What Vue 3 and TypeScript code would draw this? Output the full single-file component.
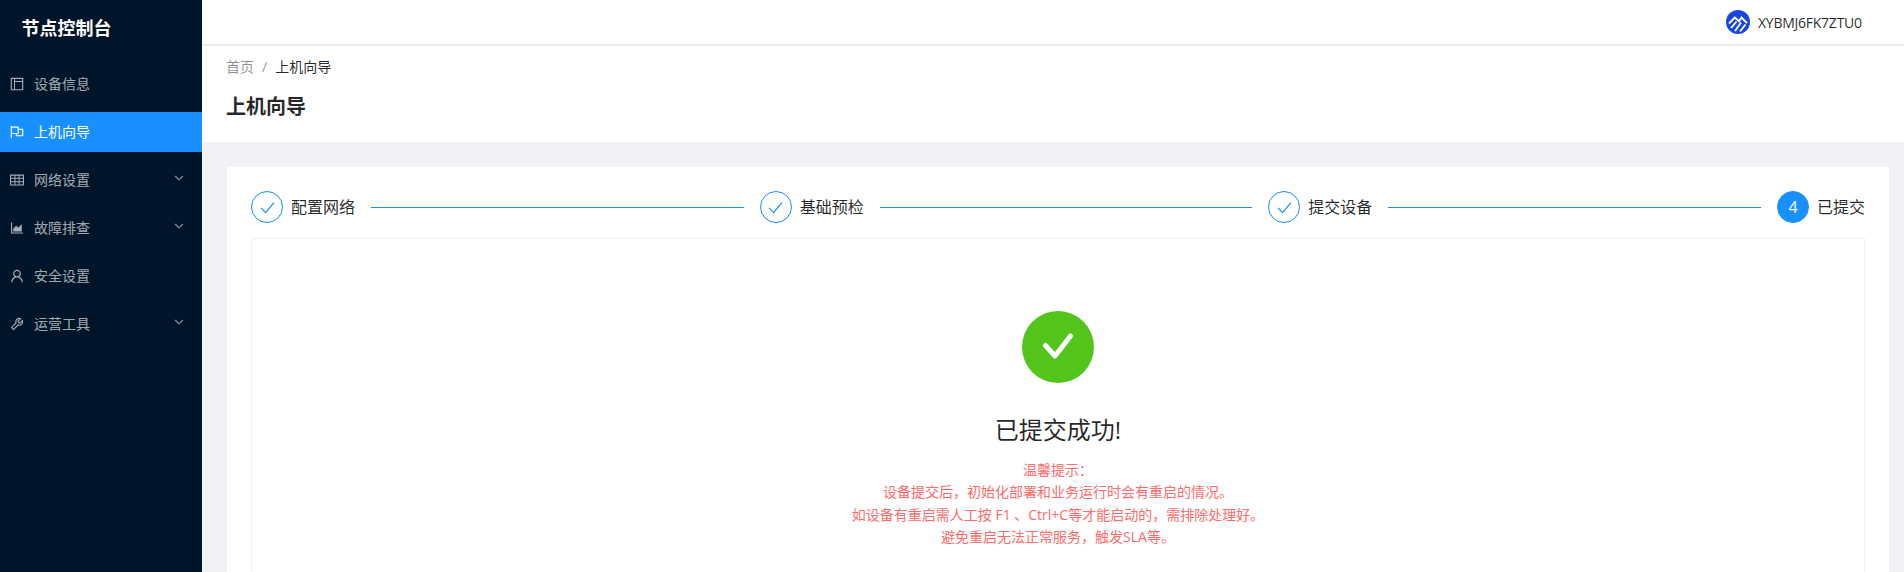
<template>
  <div class="layout">
    <aside class="sider">
      <div class="logo">节点控制台</div>
      <nav class="menu">
        <div v-for="item in menu" :key="item.label" :class="['menu-item', { active: item.active }]">
          <svg class="menu-icon" viewBox="64 64 896 896">
            <path :d="item.icon" fill="currentColor" />
          </svg>
          <span class="menu-label">{{ item.label }}</span>
          <svg v-if="item.sub" class="menu-arrow" viewBox="0 0 12 12">
            <path d="M1.2 3.6 6 8.2l4.8-4.6" fill="none" stroke="currentColor" stroke-width="1.7" />
          </svg>
        </div>
      </nav>
    </aside>
    <div class="right">
      <header class="topbar">
        <svg class="avatar" viewBox="0 0 24 24">
          <circle cx="12" cy="12" r="12" fill="#1747e0" />
          <path
            d="M3 13.5 8.8 7.5l4.2 3.8 2.5-3.8 5.5 5.5M5 18l5.5-6.5M9 21l6-8.5M14 21.5l5.5-7"
            fill="none"
            stroke="#fff"
            stroke-width="1.9"
          />
        </svg>
        <span class="device-id">XYBMJ6FK7ZTU0</span>
      </header>
      <section class="page-header">
        <div class="breadcrumb">
          <span>首页</span>
          <span class="sep">/</span>
          <span class="current">上机向导</span>
        </div>
        <h1>上机向导</h1>
      </section>
      <main class="content">
        <div class="card">
          <div class="steps">
            <div v-for="(step, index) in steps" :key="step" class="step">
              <div :class="['step-circle', { current: index === steps.length - 1 }]">
                <template v-if="index === steps.length - 1">{{ index + 1 }}</template>
                <svg v-else viewBox="0 0 14 14" class="step-check">
                  <path d="M1 7.4 5.2 11.8 13 2.4" fill="none" stroke="currentColor" stroke-width="1.2" />
                </svg>
              </div>
              <span class="step-title">{{ step }}</span>
              <div v-if="index !== steps.length - 1" class="step-line"></div>
            </div>
          </div>
          <div class="result">
            <div class="result-icon">
              <svg viewBox="0 0 40 40">
                <path
                  d="M7.5 18.5 17 29 32.5 9"
                  fill="none"
                  stroke="#fff"
                  stroke-width="5"
                  stroke-linecap="round"
                  stroke-linejoin="round"
                />
              </svg>
            </div>
            <h2>已提交成功!</h2>
            <div class="tips">
              <p v-for="tip in tips" :key="tip">{{ tip }}</p>
            </div>
          </div>
        </div>
      </main>
    </div>
  </div>
</template>

<script setup lang="ts">
interface MenuItem {
  label: string;
  icon: string;
  sub?: boolean;
  active?: boolean;
}

const menu: MenuItem[] = [
  {
    label: "设备信息",
    icon: "M880 112H144c-17.7 0-32 14.3-32 32v736c0 17.7 14.3 32 32 32h736c17.7 0 32-14.3 32-32V144c0-17.7-14.3-32-32-32zm-696 72h136v656H184V184zm656 656H384V384h456v456zM384 320V184h456v136H384z",
  },
  {
    label: "上机向导",
    active: true,
    icon: "M880 305H624V192c0-17.7-14.3-32-32-32H184v-40c0-4.4-3.6-8-8-8h-56c-4.4 0-8 3.6-8 8v784c0 4.4 3.6 8 8 8h56c4.4 0 8-3.6 8-8V640h248v113c0 17.7 14.3 32 32 32h416c17.7 0 32-14.3 32-32V337c0-17.7-14.3-32-32-32zM184 568V232h368v336H184zm656 145H504v-73h112c4.4 0 8-3.6 8-8V377h216v336z",
  },
  {
    label: "网络设置",
    sub: true,
    icon: "M928 160H96c-17.7 0-32 14.3-32 32v640c0 17.7 14.3 32 32 32h832c17.7 0 32-14.3 32-32V192c0-17.7-14.3-32-32-32zm-40 208H676V232h212v136zm0 224H676V432h212v160zM412 432h200v160H412V432zm200-64H412V232h200v136zm-264 0H136V232h212v136zm-212 64h212v160H136V432zm0 224h212v136H136V656zm276 0h200v136H412V656zm264 136V656h212v136H676z",
  },
  {
    label: "故障排查",
    sub: true,
    icon: "M888 792H200V168c0-4.4-3.6-8-8-8h-56c-4.4 0-8 3.6-8 8v688c0 4.4 3.6 8 8 8h752c4.4 0 8-3.6 8-8v-56c0-4.4-3.6-8-8-8zm-616-64h536c4.4 0 8-3.6 8-8V284c0-7.2-8.7-10.7-13.7-5.7L592 488.6l-125.4-124a8.03 8.03 0 0 0-11.3 0l-189 189.6a7.87 7.87 0 0 0-2.3 5.6V720c0 4.4 3.6 8 8 8z",
  },
  {
    label: "安全设置",
    icon: "M858.5 763.6a374 374 0 0 0-80.6-119.5 375.63 375.63 0 0 0-119.5-80.6c-.4-.2-.8-.3-1.2-.5C719.5 518 760 444.7 760 362c0-137-111-248-248-248S264 225 264 362c0 82.7 40.5 156 102.8 201.1-.4.2-.8.3-1.2.5-44.8 18.9-85 46-119.5 80.6a375.63 375.63 0 0 0-80.6 119.5A371.7 371.7 0 0 0 136 901.8a8 8 0 0 0 8 8.2h60c4.4 0 7.9-3.5 8-7.8 2-77.2 33-149.5 87.8-204.3 56.7-56.7 132-87.9 212.2-87.9s155.5 31.2 212.2 87.9C779 752.7 810 825 812 902.2c.1 4.4 3.6 7.8 8 7.8h60a8 8 0 0 0 8-8.2c-1-47.8-10.9-94.3-29.5-138.2zM512 534c-45.9 0-89.1-17.9-121.6-50.4S340 407.9 340 362c0-45.9 17.9-89.1 50.4-121.6S466.1 190 512 190s89.1 17.9 121.6 50.4S684 316.1 684 362c0 45.9-17.9 89.1-50.4 121.6S557.9 534 512 534z",
  },
  {
    label: "运营工具",
    sub: true,
    icon: "M876.6 239.5c-.5-.9-1.2-1.8-2-2.5-5-5-13.1-5-18.1 0L684.2 409.3l-67.9-67.9L788.7 169c.8-.8 1.4-1.6 2-2.5 3.6-6.1 1.6-13.9-4.5-17.5-98.2-58-226.8-44.7-311.3 39.7-67 67-89.2 162-66.5 247.4l-293 293c-3 3-2.8 7.9.3 11l169.7 169.7c3.1 3.1 8.1 3.3 11 .3l292.9-292.9c85.5 22.8 180.5.7 247.6-66.4 84.4-84.5 97.7-213.1 39.7-311.3zM786 499.8c-58.1 58.1-145.3 69.3-214.6 33.6l-8.8 8.8-.1-.1-274 274.1-79.2-79.2 230.1-230.1s0 .1.1.1l52.8-52.8c-35.7-69.3-24.5-156.5 33.6-214.6a184.2 184.2 0 0 1 144-53.5L537 318.9a32.05 32.05 0 0 0 0 45.3l124.5 124.5a32.05 32.05 0 0 0 45.3 0l132.8-132.8c3.7 51.8-14.4 104.8-53.6 143.9z",
  },
];

const steps = ["配置网络", "基础预检", "提交设备", "已提交"];

const tips = [
  "温馨提示：",
  "设备提交后，初始化部署和业务运行时会有重启的情况。",
  "如设备有重启需人工按 F1 、Ctrl+C等才能启动的，需排除处理好。",
  "避免重启无法正常服务，触发SLA等。",
];
</script>

<style>
html,
body {
  margin: 0;
  height: 100%;
  overflow: hidden;
}
</style>

<style scoped>
.layout {
  display: flex;
  height: 100vh;
  overflow: hidden;
  font-family: "Open Sans", "Noto Sans CJK SC", sans-serif;
  font-size: 14px;
  color: rgba(0, 0, 0, 0.85);
  background: #f0f2f5;
}

.sider {
  width: 202px;
  flex: none;
  background: #001529;
  color: rgba(255, 255, 255, 0.65);
}

.logo {
  height: 56px;
  line-height: 56px;
  padding-left: 21.5px;
  font-size: 18px;
  font-weight: 700;
  color: #fff;
}

.menu {
  display: flex;
  flex-direction: column;
  gap: 8px;
  padding-top: 8px;
}

.menu-item {
  display: flex;
  align-items: center;
  height: 40px;
  padding: 0 18px 0 10px;
}

.menu-item.active {
  background: #1890ff;
  color: #fff;
}

.menu-icon {
  width: 14px;
  height: 14px;
  flex: none;
  margin-right: 10px;
}

.menu-label {
  flex: 1;
  line-height: 22px;
  padding-top: 1px;
  padding-bottom: 2px;
}

.menu-arrow {
  width: 10px;
  height: 10px;
  margin-top: -4px;
  color: rgba(255, 255, 255, 0.45);
}

.right {
  flex: 1;
  min-width: 0;
  display: flex;
  flex-direction: column;
}

.topbar {
  height: 44px;
  flex: none;
  display: flex;
  align-items: center;
  padding-left: 1524px;
  background: #fff;
  box-shadow: 0 1px 2px rgba(0, 21, 41, 0.05);
  white-space: nowrap;
  overflow: hidden;
}

.avatar {
  width: 24px;
  height: 24px;
  flex: none;
  margin-right: 8px;
}

.device-id {
  font-size: 14px;
  letter-spacing: -0.25px;
}

.page-header {
  flex: none;
  height: 96px;
  margin-top: 2px;
  padding: 10px 24px 0;
  box-sizing: border-box;
  background: #fff;
}

.breadcrumb {
  line-height: 22px;
  color: rgba(0, 0, 0, 0.45);
}

.sep {
  margin: 0 8px;
}

.current {
  color: rgba(0, 0, 0, 0.85);
}

h1 {
  margin: 15px 0 0;
  font-size: 20px;
  line-height: 28px;
  font-weight: 600;
}

.content {
  flex: 1;
  min-height: 0;
  padding: 25px 15px 0 25px;
}

.card {
  height: 100%;
  box-sizing: border-box;
  padding: 24px 24px 0;
  background: #fff;
}

.steps {
  display: flex;
}

.step {
  flex: 1;
  display: flex;
  align-items: center;
  margin-right: 16px;
}

.step:last-child {
  flex: none;
  margin-right: 0;
}

.step-circle {
  width: 32px;
  height: 32px;
  flex: none;
  box-sizing: border-box;
  border: 1px solid #1890ff;
  border-radius: 50%;
  display: flex;
  align-items: center;
  justify-content: center;
  color: #1890ff;
  font-size: 16px;
}

.step-circle.current {
  background: #1890ff;
  color: #fff;
}

.step-check {
  width: 15px;
  height: 15px;
}

.step-title {
  margin-left: 8px;
  font-size: 16px;
  line-height: 32px;
  white-space: nowrap;
}

.step-line {
  flex: 1;
  height: 1px;
  margin-left: 16px;
  background: #1890ff;
}

.result {
  margin-top: 15px;
  height: 400px;
  box-sizing: border-box;
  border: 1px solid #f0f0f0;
  padding-top: 72px;
  text-align: center;
}

.result-icon {
  width: 72px;
  height: 72px;
  margin: 0 auto;
  border-radius: 50%;
  background: #52c41a;
  display: flex;
  align-items: center;
  justify-content: center;
}

.result-icon svg {
  width: 40px;
  height: 40px;
}

h2 {
  margin: 31px 0 0;
  font-size: 24px;
  line-height: 32px;
  font-weight: 400;
}

.tips {
  margin-top: 13px;
  color: #ff6b6b;
  line-height: 22.3px;
}

.tips p {
  margin: 0;
}
</style>
